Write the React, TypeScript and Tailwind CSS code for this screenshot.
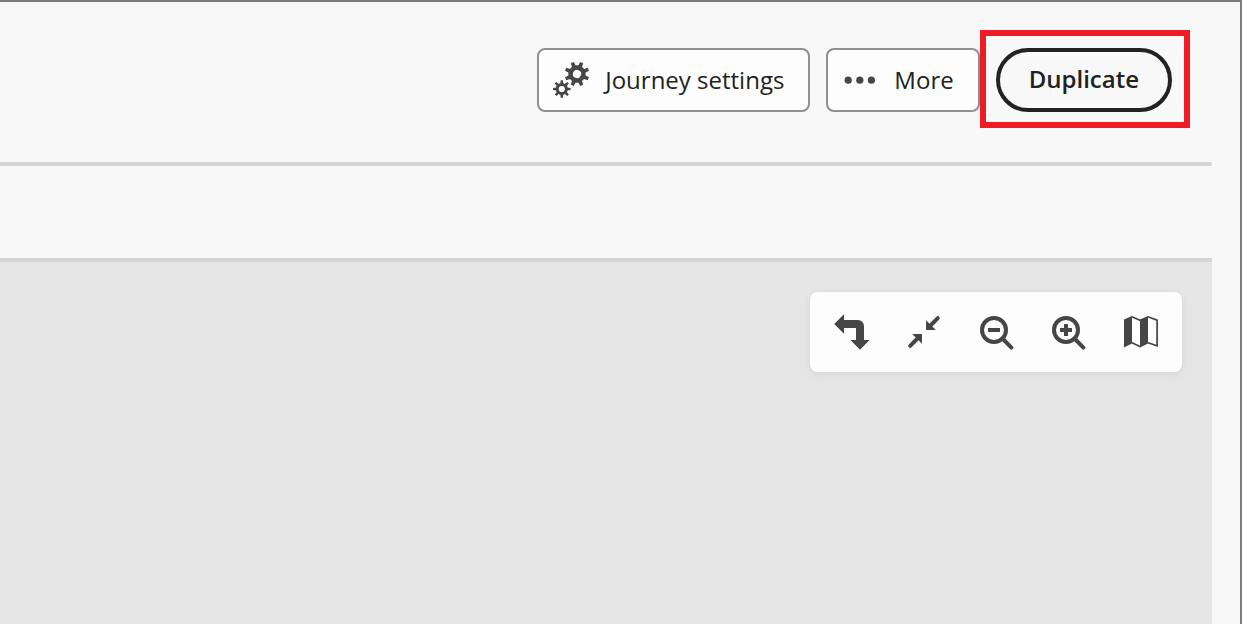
import type { ReactNode } from "react";

const TEETH = [0, 45, 90, 135, 180, 225, 270, 315];

function GearsIcon() {
  return (
    <svg width="36" height="36" viewBox="0 0 36 36" fill="#464646" aria-hidden="true">
      <g transform="translate(24 12) rotate(22.5)">
        {TEETH.map((a) => (
          <path key={a} transform={`rotate(${a})`} d="M-2.1-7.5L-1.6-12.3H1.6L2.1-7.5Z" />
        ))}
        <circle r="6.4" fill="none" stroke="#464646" strokeWidth="4.6" />
      </g>
      <g transform="translate(8.8 27)">
        {TEETH.map((a) => (
          <path key={a} transform={`rotate(${a})`} d="M-1.5-5L-1.1-8.8H1.1L1.5-5Z" />
        ))}
        <circle r="4.6" fill="none" stroke="#464646" strokeWidth="3" />
      </g>
    </svg>
  );
}

function MoreIcon() {
  return (
    <svg width="36" height="36" viewBox="0 0 36 36" fill="#464646" aria-hidden="true">
      <circle cx="6.2" cy="18.2" r="3.6" />
      <circle cx="17.8" cy="18.2" r="3.6" />
      <circle cx="29.4" cy="18.2" r="3.6" />
    </svg>
  );
}

function LayoutIcon() {
  return (
    <svg width="36" height="36" viewBox="0 0 36 36" fill="#464646" aria-hidden="true">
      <path d="M.2 10L10 .3V6h14a6 6 0 0 1 6 6v14h5.6L26 35.8 16.4 26H22V14H10v5.7Z" />
    </svg>
  );
}

function CollapseIcon() {
  return (
    <svg width="36" height="36" viewBox="0 0 36 36" fill="#464646" aria-hidden="true">
      <path d="M20 6.2V16h9.8ZM16 29.8V20H6.2Z" />
      <path d="M24 12L31.8 4.2M12 24L4.2 31.8" stroke="#464646" strokeWidth="4" strokeLinecap="round" />
    </svg>
  );
}

function ZoomIcon({ plus }: { plus?: boolean }) {
  return (
    <svg width="36" height="36" viewBox="0 0 36 36" fill="none" stroke="#464646" strokeWidth="4" aria-hidden="true">
      <circle cx="16" cy="16" r="12" />
      <path d="M24.5 24.5L33.4 33.6" strokeLinecap="round" />
      <path d={plus ? "M10 16h12M16 10v12" : "M10 16h12"} />
    </svg>
  );
}

function MapIcon() {
  return (
    <svg width="36" height="36" viewBox="0 0 36 36" fill="#464646" aria-hidden="true">
      <path d="M2 5.6L10 2V29.6L2 33.4ZM18 5.6L26 2V29.6L18 33.6Z" />
      <path
        d="M10 2.8L18.4 6.6M10 28.8L18.4 32.8M26 2.8L35.1 6.2V31.8L26 28.8"
        fill="none"
        stroke="#464646"
        strokeWidth="1.7"
      />
    </svg>
  );
}

function ActionButton({ icon, children }: { icon: ReactNode; children: ReactNode }) {
  return (
    <button
      type="button"
      className="flex h-16 items-center gap-4 rounded-lg border-2 border-[#909090] bg-[#fdfdfd] pr-6 pl-3.5 text-2xl whitespace-nowrap text-[#222222]"
    >
      {icon}
      <span>{children}</span>
    </button>
  );
}

function ToolButton({ label, children }: { label: string; children: ReactNode }) {
  return (
    <button type="button" aria-label={label} className="grid size-16 place-items-center rounded">
      {children}
    </button>
  );
}

export default function App() {
  return (
    <div className="flex min-h-screen flex-col border-t-2 border-r-2 border-[#7b7b7b] bg-[#f8f8f8] pr-7 font-['Open_Sans',sans-serif]">
      <header className="flex h-40 items-start justify-end pt-7 pr-[22px]">
        <div className="flex gap-4 pt-[18px]">
          <ActionButton icon={<GearsIcon />}>Journey settings</ActionButton>
          <ActionButton icon={<MoreIcon />}>More</ActionButton>
        </div>
        <div className="border-6 border-[#ee1c25] pt-3 pr-3 pb-2.5 pl-2.5">
          <button
            type="button"
            className="flex h-16 items-center rounded-full border-4 border-[#222222] px-[29px] pb-0.5 text-2xl font-semibold whitespace-nowrap text-[#222222]"
          >
            Duplicate
          </button>
        </div>
      </header>
      <hr className="h-1 rounded-r-full border-0 bg-[#d5d5d5]" />
      <main className="mt-[92px] flex flex-1 items-start justify-end border-t-4 border-[#d5d5d5] bg-[#e6e6e6] pt-[30px] pr-[30px]">
        <div
          role="toolbar"
          aria-label="Canvas tools"
          className="flex items-center gap-2 rounded-lg bg-[#fdfdfd] px-2.5 py-2 shadow-[0_2px_8px_rgba(0,0,0,0.08)]"
        >
          <ToolButton label="Change layout"><LayoutIcon /></ToolButton>
          <ToolButton label="Fit to screen"><CollapseIcon /></ToolButton>
          <ToolButton label="Zoom out"><ZoomIcon /></ToolButton>
          <ToolButton label="Zoom in"><ZoomIcon plus /></ToolButton>
          <ToolButton label="Show map"><MapIcon /></ToolButton>
        </div>
      </main>
    </div>
  );
}
